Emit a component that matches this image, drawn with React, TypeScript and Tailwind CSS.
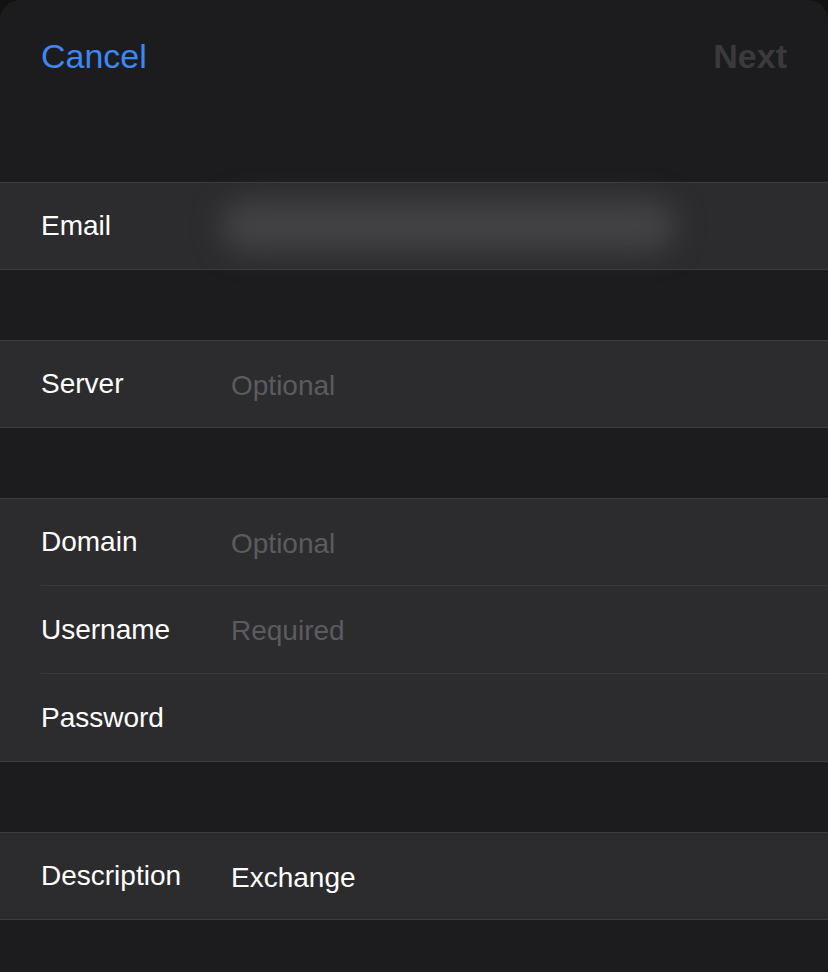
import React from "react";

const font = { fontFamily: '"Liberation Sans", Arial, sans-serif' };

function Row({
  label,
  value,
  placeholder,
  h,
  sep,
  blur,
}: {
  label: string;
  value?: string;
  placeholder?: string;
  h: string;
  sep?: boolean;
  blur?: boolean;
}) {
  return (
    <div className={`pl-[41px] ${h}`}>
      <div
        className={`flex h-full items-center ${sep ? "border-b border-[#3a3a3d]" : ""}`}
      >
        <div className="w-[190px] shrink-0 text-[28px] leading-none text-white">
          {label}
        </div>
        {blur ? (
          <div className="ml-[-10px] h-[52px] w-[455px] rounded-[26px] bg-[#424245] blur-[14px]" />
        ) : value ? (
          <div className="mt-[3px] text-[28px] leading-none text-white">{value}</div>
        ) : (
          <div className="mt-[3px] text-[28px] leading-none text-[#5b5b60]">
            {placeholder}
          </div>
        )}
      </div>
    </div>
  );
}

function Group({ children }: { children: React.ReactNode }) {
  return (
    <div className="mt-[70px] border-y border-[#3d3d40] bg-[#2c2c2e]">{children}</div>
  );
}

export default function App() {
  return (
    <div className="min-h-[972px] bg-[#121213]" style={font}>
      <div className="h-[972px] overflow-hidden rounded-t-[20px] bg-[#1c1c1e]">
        <div className="flex h-[112px] items-center justify-between px-[41px]">
          <span className="text-[34px] leading-none text-[#3d87f5]">Cancel</span>
          <span className="text-[34px] font-semibold leading-none text-[#3a3a3c]">
            Next
          </span>
        </div>
        <Group>
          <Row label="Email" h="h-[86px]" blur />
        </Group>
        <Group>
          <Row label="Server" placeholder="Optional" h="h-[86px]" />
        </Group>
        <Group>
          <Row label="Domain" placeholder="Optional" h="h-[87px]" sep />
          <Row label="Username" placeholder="Required" h="h-[88px]" sep />
          <Row label="Password" h="h-[87px]" value="" placeholder="" />
        </Group>
        <Group>
          <Row label="Description" value="Exchange" h="h-[86px]" />
        </Group>
      </div>
    </div>
  );
}
